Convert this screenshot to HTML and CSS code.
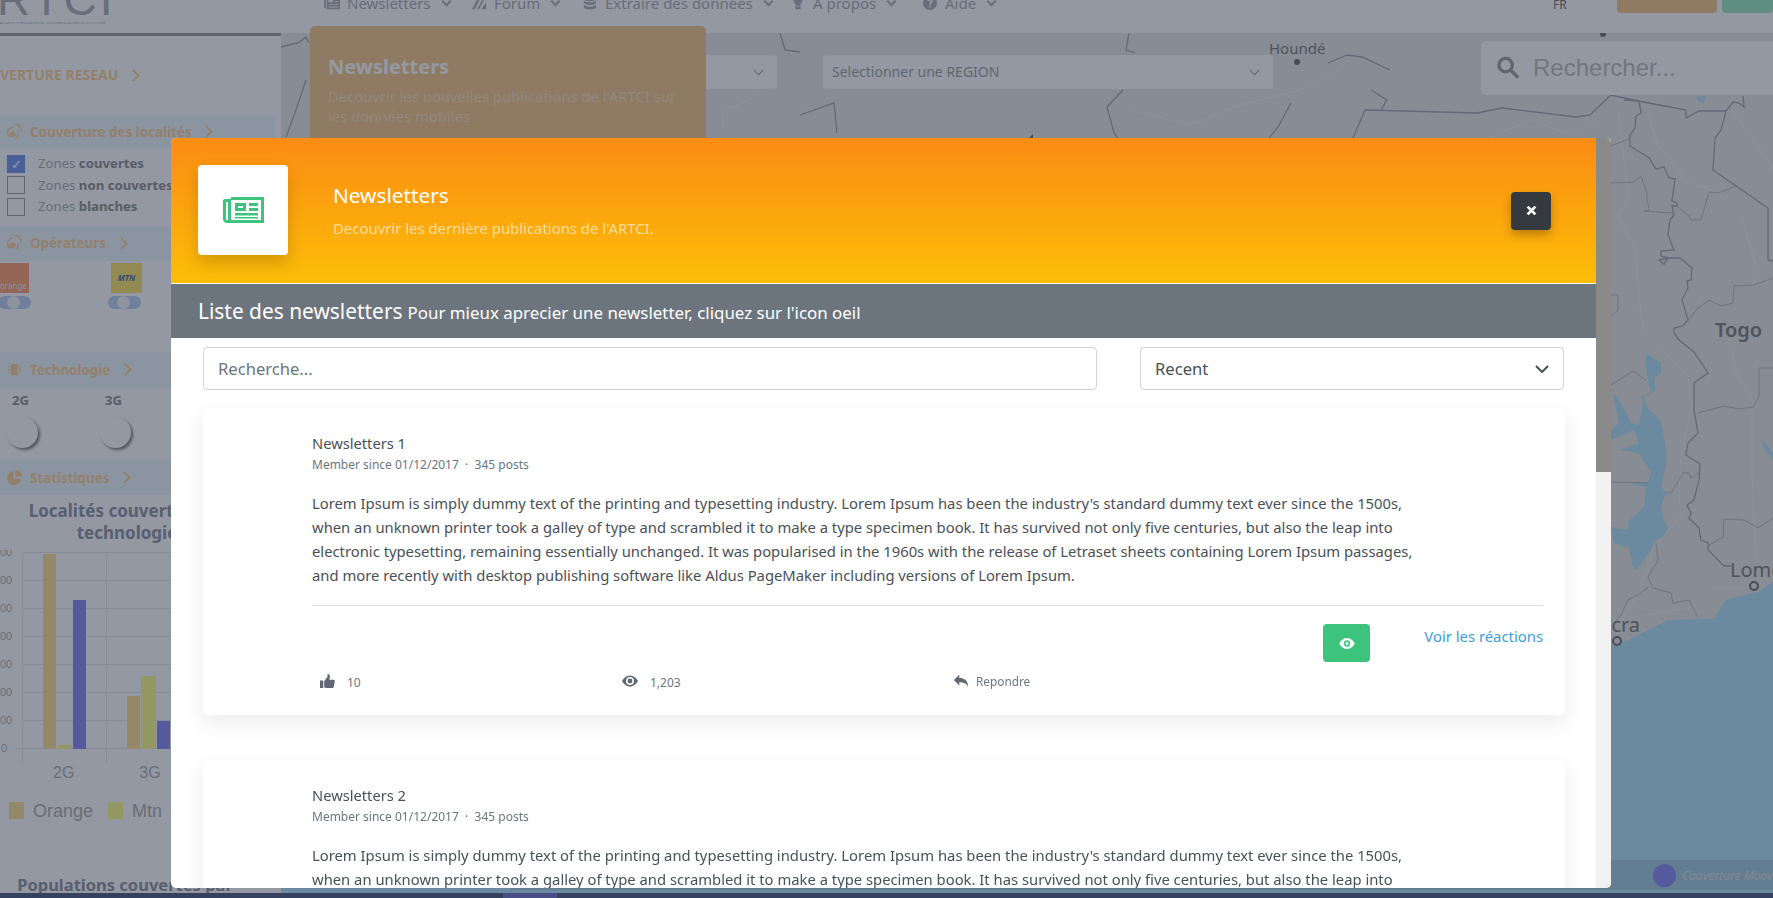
FILE: index.html
```html
<!DOCTYPE html>
<html lang="fr">
<head>
<meta charset="utf-8">
<title>ARTCI - Newsletters</title>
<link rel="stylesheet" href="styles.css">
</head>
<body>
<div class="page">
  <header class="topbar">
    <div class="logo">
      <div class="logo-word">RTCI</div>
      <div class="logo-sub">AUTORITE DE REGULATION DES TELECOMMUNICATIONS DE COTE D'IVOIRE</div>
    </div>
    <nav class="nav">
      <span class="nav-item nav-news"><svg class="nav-ico" viewBox="0 0 20 16"><path d="M1 3h2v11H1zM4 1h15v14H4zM6 3v4h5V3zm7 0v1h4V3zm0 3v1h4V6zM6 9v1h11V9zm0 3v1h11v-1z" fill-rule="evenodd"/></svg>Newsletters<i class="chev"></i></span>
      <span class="nav-item nav-forum"><svg class="nav-ico" viewBox="0 0 20 16"><path d="M2 15 9 2h3L5 15zm6 0 6-11h2l-6 11zm5 0 5-8v8z"/></svg>Forum<i class="chev"></i></span>
      <span class="nav-item nav-data"><svg class="nav-ico" viewBox="0 0 16 16"><ellipse cx="8" cy="3" rx="7" ry="3"/><path d="M1 5c2 3 12 3 14 0v3c-2 3-12 3-14 0zm0 5c2 3 12 3 14 0v3c-2 3-12 3-14 0z"/></svg>Extraire des données<i class="chev"></i></span>
      <span class="nav-item nav-about"><svg class="nav-ico" viewBox="0 0 12 16"><path d="M6 0a5 5 0 0 1 3 9v2H3V9a5 5 0 0 1 3-9zM3 12h6v3H3z"/></svg>À propos<i class="chev"></i></span>
      <span class="nav-item nav-help"><svg class="nav-ico" viewBox="0 0 16 16"><path fill-rule="evenodd" d="M8 0a8 8 0 1 1 0 16A8 8 0 0 1 8 0zM5 6h2c0-1 2-1.500 2 0 0 1-2 1.500-2 4h2c0-2 2-2.500 2-4.500C11 2.500 5.500 2.500 5 6zm2 5v2h2v-2z"/></svg>Aide<i class="chev"></i></span>
    </nav>
    <span class="lang">FR</span>
    <span class="top-btn top-btn-brown"></span>
    <span class="top-btn top-btn-green"></span>
  </header>
  <div class="main">
    <aside class="sidebar">
      <div class="side-title">VERTURE RESEAU<i class="gt"></i></div>
      <div class="band band-first"><svg class="band-ico" viewBox="0 0 16 16"><circle cx="6" cy="11" r="2.500"/><path d="M2 6c1-2 3-3 5-3M3 14c-3-2-3-6-1-8M9 15c2-1 3-3 3-5M7 0c5 0 8 3 8 8"/></svg>Couverture des localités<i class="gt"></i></div>
      <ul class="zones">
        <li><span class="check check-on">✓</span>Zones&nbsp;<b>couvertes</b></li>
        <li><span class="check"></span>Zones&nbsp;<b>non couvertes</b></li>
        <li><span class="check"></span>Zones&nbsp;<b>blanches</b></li>
      </ul>
      <div class="band band-op"><svg class="band-ico" viewBox="0 0 16 16"><circle cx="6" cy="11" r="2.500"/><path d="M2 6c1-2 3-3 5-3M3 14c-3-2-3-6-1-8M9 15c2-1 3-3 3-5M7 0c5 0 8 3 8 8"/></svg>Opérateurs<i class="gt"></i></div>
      <div class="ops">
        <div class="op"><span class="op-logo op-orange">orange</span><span class="toggle"></span></div>
        <div class="op op-mtn"><span class="op-logo op-yellow"><em>MTN</em></span><span class="toggle"></span></div>
      </div>
      <div class="band band-tech"><svg class="band-ico band-solid" viewBox="0 0 16 16"><path d="M4 2h8v12H4zM1 4h2v1.500H1zm0 3h2v1.500H1zm0 3h2v1.500H1zm12-6h2v1.500h-2zm0 3h2v1.500h-2zm0 3h2v1.500h-2z"/></svg>Technologie<i class="gt"></i></div>
      <div class="techs">
        <div class="tech"><b>2G</b><span class="radio"></span></div>
        <div class="tech"><b>3G</b><span class="radio"></span></div>
      </div>
      <div class="band band-stat"><svg class="band-ico band-solid" viewBox="0 0 16 16"><path d="M7 1v8h8a7.500 7.500 0 1 1-8-8zM9 0a7 7 0 0 1 7 7H9z"/></svg>Statistiques<i class="gt"></i></div>
      <h3 class="chart-title">Localités couvertes par technologie</h3>
      <svg class="chart" viewBox="0 0 281 212">
        <g class="grid"><path d="M22 2.500H281M22 30.500H281M22 58.500H281M22 86.500H281M22 114.500H281M22 142.500H281M22 170.500H281M15 198.500H281"/><path d="M22.500 2V212M106.500 2V212M190.500 2V212"/></g>
        <g class="ticks"><text x="0" y="6">00</text><text x="0" y="34">00</text><text x="0" y="62">00</text><text x="0" y="90">00</text><text x="0" y="118">00</text><text x="0" y="146">00</text><text x="0" y="174">00</text><text x="1" y="202">0</text></g>
        <rect class="bar-o" x="43" y="4" width="13" height="195"/><rect class="bar-m" x="57" y="195" width="15" height="4"/><rect class="bar-b" x="73" y="50" width="13" height="149"/>
        <rect class="bar-o" x="127" y="146" width="13" height="53"/><rect class="bar-m" x="141" y="126" width="15" height="73"/><rect class="bar-b" x="157" y="171" width="13" height="28"/>
      </svg>
      <div class="axis"><span>2G</span><span>3G</span></div>
      <div class="legend"><i class="sw sw-o"></i>Orange<i class="sw sw-m"></i>Mtn</div>
      <h3 class="chart-title chart-title-2">Populations couvertes par</h3>
    </aside>
    <section class="map">
      <svg class="map-svg" viewBox="281 33 1492 865" preserveAspectRatio="none">
        <path class="water" d="M1611 646 1628 640 1668 620 1699 619 1716 618 1716 615 1726 600 1744 595 1758 592 1773 582V898H281V888H1611z"/>
        <path class="water" d="M1646 353 1661 363 1661 373 1654 378 1656 390 1644 398 1649 410 1661 420 1664 437 1666 450 1666 467 1661 487 1666 493 1661 507 1664 520 1668 527 1664 537 1656 540 1649 553 1636 570 1633 567 1629 547 1614 543 1611 527 1628 530 1628 522 1644 507 1646 487 1629 483 1648 482 1651 473 1639 453 1619 450 1639 443 1634 430 1611 440 1611 430 1619 423 1613 393 1621 403 1631 423 1639 425 1643 403 1641 397 1651 393 1648 380 1646 367z"/>
        <path class="water" d="M1761 438 1773 453V460L1764 448zM1696 96H1706L1704 103 1699 102z"/>
        <g class="border-thin">
          <path d="M1618 113 1626 173 1629 200 1618 215 1636 250 1639 300 1644 333"/>
          <path d="M1644 103 1658 146 1681 173 1683 180 1718 193 1741 216 1758 273 1751 290"/>
          <path d="M1731 110 1768 160 1773 173"/>
          <path d="M1654 340 1688 377 1691 407 1681 457 1679 503 1686 510 1654 547 1640 590 1620 625"/>
          <path d="M1611 620 1691 608 1711 588 1749 588"/>
          <path d="M1732 345 1735 370 1752 400 1752 480 1756 560"/>
          <path d="M1130 110 1190 125 1240 105 1300 90 1340 70"/>
          <path d="M1490 138 1530 120 1570 135 1600 120"/>
          <path d="M722 130 724 110 750 100 760 90"/>
        </g>
        <g class="border-mid">
          <path d="M1611 146 1629 139M1611 183 1634 182 1641 176 1646 190 1649 210 1644 211 1673 213"/>
          <path d="M1677 206 1688 215 1691 220 1701 220 1709 192 1718 193 1736 186"/>
          <path d="M1611 295H1618V310L1611 316"/>
          <path d="M1688 320 1698 308 1709 300 1721 306 1733 303 1734 286 1754 285 1773 278"/>
          <path d="M1773 368H1759V397L1753 407 1739 409 1724 406 1698 413"/>
          <path d="M1773 518 1758 528 1744 520 1724 519 1723 537 1709 545"/>
          <path d="M1611 385 1633 371 1646 380M1611 482 1648 483"/>
          <path d="M1666 493H1671L1683 473H1689L1691 478 1699 473"/>
          <path d="M1656 543 1658 560 1648 577 1653 588 1671 593 1673 603 1689 600 1698 617"/>
          <path d="M1648 587 1641 593 1628 600 1621 615 1611 627"/>
        </g>
        <g class="border">
          <path d="M1353 138 1365 110 1477 113 1502 108 1576 117 1590 115 1611 95 1638 101 1686 110V118L1699 111H1726L1733 102 1739 103 1744 107 1743 96"/>
          <path d="M1624 100 1639 101 1641 113 1636 116 1635 128 1630 135V146L1649 158 1656 169 1664 167 1669 178 1675 179 1672 201 1677 203V206H1672L1674 215 1670 220 1668 235 1674 250 1661 251V256L1668 258 1664 264 1659 260 1668 258H1680L1692 268 1691 280 1687 281 1688 288 1682 300 1688 320 1683 326 1674 328V333L1679 340 1694 352 1708 373 1694 383V410L1698 433 1688 443 1686 455 1700 464 1699 480 1694 500 1687 505 1691 513 1689 518 1699 528 1701 540 1708 543V550L1724 566H1731"/>
          <path d="M1726 111 1721 130 1715 138 1713 170 1768 208V260L1773 261"/>
          <path d="M1129 33 1126 50 1135 53M1123 90 1107 107 1114 133 1118 138"/>
          <path d="M1291 103 1278 127 1269 138M800 115 834 103 837 133"/>
          <path d="M281 47 298 43 306 37 309 43M286 137 296 110 306 80M780 33 785 50 800 52M1390 70 1362 57 1347 55 1328 63M1371 90 1387 100 1381 110"/>
        </g>
        <circle class="pin" cx="1297" cy="62" r="3"/>
        <circle class="pin" cx="1603" cy="34" r="3"/>
        <path class="pin" d="M1033 138 1033 134 1029 138z"/>
        <circle class="pin-ring" cx="1754" cy="586" r="4"/>
        <circle class="pin-ring" cx="1617" cy="641" r="4"/>
      </svg>
      <div class="select-box select-a"><i class="chev"></i></div>
      <div class="select-box select-b">Selectionner une REGION<i class="chev"></i></div>
      <div class="card-news">
        <h2>Newsletters</h2>
        <p>Decouvrir les nouvelles publications de l'ARTCI sur les données mobiles</p>
      </div>
      <div class="search-box">
        <svg class="search-ico" viewBox="0 0 24 24"><circle cx="9" cy="9" r="7"/><path d="m14 14 8 8"/></svg>Rechercher...
      </div>
      <span class="city city-hounde">Houndé</span>
      <span class="city city-togo">Togo</span>
      <span class="city city-lome">Lomé</span>
      <span class="city city-accra">Accra</span>
      <div class="map-legend"><i class="moov-dot"></i>Couverture Moov</div>
    </section>
  </div>
  <div class="bottom-strip"><i></i></div>
</div>

<div class="overlay"></div>

<div class="modal">
  <div class="modal-scroll">
    <div class="modal-head">
      <div class="head-icon">
        <svg viewBox="0 0 41 26" width="41" height="26"><path class="ico-news" fill-rule="evenodd" d="M8 0h33v26H4C1.800 26 0 24.200 0 22V4c0-1.300 1-2 2-2h6zM3 5v17c0 .6.400 1 1 1h1V5zM8 3v20h30V3zM12 6h11v8H12zm3 3v2h5V9zM26 6h9v3h-9zm0 5h9v3h-9zM12 16h23v2.500H12zm0 4h23v1.500H12z"/></svg>
      </div>
      <div class="head-text">
        <h2>Newsletters</h2>
        <p>Decouvrir les dernière publications de l'ARTCI.</p>
      </div>
      <button class="close" type="button"><svg viewBox="0 0 10 10" width="11" height="11"><path d="m1.500 1.500 7 7m0-7-7 7"/></svg></button>
    </div>
    <div class="modal-bar"><strong>Liste des newsletters</strong> <span>Pour mieux aprecier une newsletter, cliquez sur l'icon oeil</span></div>
    <div class="modal-body">
      <div class="filters">
        <div class="field field-search">Recherche...</div>
        <div class="field field-select">Recent<svg class="field-chev" viewBox="0 0 14 8" width="14" height="8"><path d="m1 1 6 6 6-6"/></svg></div>
      </div>

      <article class="post">
        <h4>Newsletters 1</h4>
        <div class="meta">Member since 01/12/2017 &nbsp;·&nbsp; 345 posts</div>
        <p>Lorem Ipsum is simply dummy text of the printing and typesetting industry. Lorem Ipsum has been the industry's standard dummy text ever since the 1500s, when an unknown printer took a galley of type and scrambled it to make a type specimen book. It has survived not only five centuries, but also the leap into electronic typesetting, remaining essentially unchanged. It was popularised in the 1960s with the release of Letraset sheets containing Lorem Ipsum passages, and more recently with desktop publishing software like Aldus PageMaker including versions of Lorem Ipsum.</p>
        <hr>
        <div class="post-actions">
          <button class="eye-btn" type="button"><svg viewBox="0 0 20 14" width="16" height="11"><path fill-rule="evenodd" d="M10 0c4.500 0 8 3.500 10 7-2 3.500-5.500 7-10 7S2 10.500 0 7c2-3.500 5.500-7 10-7zm0 3a4 4 0 1 0 0 8 4 4 0 0 0 0-8zm0 2a2 2 0 1 1 0 4 2 2 0 0 1 0-4z"/></svg></button>
          <a class="reactions" href="#">Voir les réactions</a>
        </div>
        <div class="post-foot">
          <span class="stat stat-like"><svg viewBox="0 0 16 16" width="15" height="15"><path d="M0 7h3.500v8H0zM4.500 7.500 8 3V0c2 0 3 1.500 2.500 3.500L10 6h4.500c1 0 1.500 1 1.300 2l-1.300 6c-.2.700-.8 1-1.500 1H7c-1 0-1.500-.5-2.500-.8z"/></svg><span>10</span></span>
          <span class="stat stat-views"><svg viewBox="0 0 20 14" width="16" height="12"><path fill-rule="evenodd" d="M10 0c4.500 0 8 3.500 10 7-2 3.500-5.500 7-10 7S2 10.500 0 7c2-3.500 5.500-7 10-7zm0 2a5 5 0 1 0 0 10 5 5 0 0 0 0-10zm0 2a3 3 0 1 1 0 6 3 3 0 0 1 0-6z"/></svg><span>1,203</span></span>
          <span class="stat stat-reply"><svg viewBox="0 0 16 14" width="14" height="13"><path d="M6 0v4c6 0 10 3 10 10-2-4-5-5-10-5v4L0 6.500z"/></svg><span>Repondre</span></span>
        </div>
      </article>

      <article class="post">
        <h4>Newsletters 2</h4>
        <div class="meta">Member since 01/12/2017 &nbsp;·&nbsp; 345 posts</div>
        <p>Lorem Ipsum is simply dummy text of the printing and typesetting industry. Lorem Ipsum has been the industry's standard dummy text ever since the 1500s, when an unknown printer took a galley of type and scrambled it to make a type specimen book. It has survived not only five centuries, but also the leap into electronic typesetting, remaining essentially unchanged. It was popularised in the 1960s with the release of Letraset sheets containing Lorem Ipsum passages, and more recently with desktop publishing software like Aldus PageMaker including versions of Lorem Ipsum.</p>
      </article>
    </div>
  </div>
  <div class="scrollbar"><div class="scroll-thumb"></div></div>
</div>
</body>
</html>
```
FILE: styles.css
```css
* { box-sizing: border-box; }
html, body { margin: 0; height: 100%; overflow: hidden; }
body { font-family: "Noto Sans", "Open Sans", sans-serif; color: #495057; background: #fff; }
ul { margin: 0; padding: 0; list-style: none; }

/* --- page behind the modal --- */
.page { height: 898px; display: flex; flex-direction: column; overflow: hidden; }
.topbar { height: 33px; flex: none; background: #fff; display: flex; align-items: flex-start; overflow: hidden; }
.logo { width: 347px; flex: none; margin-top: -24px; color: #a8a8b0; }
.logo-word { font: 400 46px/46px "Liberation Sans", sans-serif; letter-spacing: 3px; margin-left: -3px; }
.logo-sub { width: 110px; font-size: 3px; line-height: 3px; white-space: nowrap; overflow: hidden; }
.nav { display: flex; margin-top: -9px; font-size: 15px; line-height: 24px; color: #a8a8b0; }
.nav-item { display: flex; align-items: center; white-space: nowrap; }
.nav-ico { width: 18px; height: 14px; margin-left: -24px; margin-right: 6px; fill: #a8a8b0; }
.nav-news { width: 147px; }
.nav-forum { width: 111px; }
.nav-data { width: 208px; }
.nav-about { width: 132px; }
.nav-help { width: 609px; }
.chev { display: inline-block; width: 7px; height: 7px; border-right: 2px solid currentColor; border-bottom: 2px solid currentColor; transform: rotate(45deg); margin: -3px 0 0 12px; }
.lang { position: absolute; left: 1553px; top: -3px; font-size: 12px; line-height: 16px; color: #666; }
.top-btn { position: absolute; top: 0; height: 13px; border-radius: 0 0 4px 4px; }
.top-btn-brown { left: 1617px; width: 100px; background: #f6c280; }
.top-btn-green { left: 1722px; width: 51px; background: #96e8b8; }

.main { flex: 1; display: flex; min-height: 0; }
.sidebar { width: 281px; flex: none; background: #fff; border-top: 3px solid #999; overflow: hidden; color: #888; }
.side-title { display: flex; align-items: center; margin: 27px 0 0 0; font-size: 14px; font-weight: 700; line-height: 24px; color: #ffcf90; white-space: nowrap; height: 24px; }
.gt { display: block; flex: none; width: 9px; height: 9px; margin-left: 11px; border-top: 2px solid currentColor; border-right: 2px solid currentColor; transform: rotate(45deg); }
.band { width: 275px; display: flex; align-items: center; font-size: 13.400px; font-weight: 700; color: #ffcf90; background: #eef8ff; padding-left: 30px; position: relative; white-space: pre; }
.band-ico { position: absolute; left: 7px; top: 50%; width: 15px; height: 15px; margin-top: -8px; fill: #ffcf90; stroke: #ffcf90; stroke-width: 1.500; }
.band-ico path { fill: none; }
.band-solid { stroke: none; }
.band-solid path { fill: #ffcf90; }
.band-first { height: 33px; margin-top: 28px; }
.band-op { height: 35px; margin-top: 8px; }
.band-tech { height: 36px; margin-top: 41px; }
.band-stat { height: 34px; margin-top: 1px; }
.zones { margin: 5px 0 0 7px; font-size: 13.200px; line-height: 21.500px; color: #aaa; }
.zones li { display: flex; align-items: center; white-space: nowrap; }
.zones b { color: #888; }
.check { width: 18px; height: 18px; margin-right: 13px; border: 1px solid #999; display: block; font-size: 13px; line-height: 17px; text-align: center; color: #fff; flex: none; }
.check-on { background: #6f8ff0; border-color: #6f8ff0; }
.ops { display: flex; height: 48px; margin-top: 2px; }
.op { width: 111px; display: flex; flex-direction: column; }
.op-mtn { width: 60px; }
.op-logo { display: block; width: 29px; height: 30px; overflow: hidden; font-size: 8px; line-height: 46px; color: #eee; }
.op-orange { background: #ff9a6a; }
.op-yellow { width: 31px; background: #ffe060; text-align: center; line-height: 30px; color: #3a6ab0; font-weight: 700; }
.toggle { display: block; position: relative; width: 33px; height: 13px; margin: 3px 0 0 -2px; background: #b8cdf0; border-radius: 7px; }
.toggle::before { content: ""; position: absolute; left: 9px; top: 0; width: 13px; height: 13px; border-radius: 50%; background: #f4f4f4; }
.op-mtn .toggle { margin-left: -3px; }
.techs { display: flex; height: 72px; }
.tech { width: 93px; padding: 3px 0 0 8px; font-size: 13px; line-height: 18px; color: #888; }
.tech b { display: block; margin-left: 4px; }
.radio { display: block; width: 31px; height: 31px; margin: 8px 0 0 -1px; border-radius: 50%; background: #fff; box-shadow: 2px 2px 3px #777; }
.chart-title { margin: 5px 0 0; width: 254px; font-size: 17px; line-height: 22px; font-weight: 700; text-align: center; color: #8a8a9a; }
.chart { display: block; width: 281px; height: 212px; margin-top: 6px; }
.chart .grid path { stroke: #e6e6e6; stroke-width: 1; fill: none; }
.ticks { font: 11px "Liberation Sans", sans-serif; fill: #aaa; }
.bar-o { fill: #ffe08c; }
.bar-m { fill: #ffff82; }
.bar-b { fill: #8280f5; }
.axis { display: flex; padding-left: 53px; gap: 65px; font: 16px/22px "Liberation Sans", sans-serif; color: #aaa; }
.legend { display: flex; align-items: center; margin: 16px 0 0 9px; font: 18px/22px "Liberation Sans", sans-serif; color: #aaa; }
.sw { width: 15px; height: 17px; margin-right: 9px; }
.sw-o { background: #ffe08c; }
.sw-m { margin-left: 15px; background: #ffff82; }
.chart-title-2 { margin-top: 52px; width: 250px; font-size: 16.500px; }

.map { flex: 1; position: relative; background: #e6e6e4; }
.map-svg { position: absolute; inset: 0; width: 100%; height: 100%; }
.water { fill: #b0e2f8; }
.border path { fill: none; stroke: #a0a0aa; stroke-width: 1.300; }
.border-mid path { fill: none; stroke: #b8b8c0; stroke-width: 1; }
.border-thin path { fill: none; stroke: #fff; stroke-width: 1; opacity: .45; }
.pin { fill: #666; }
.pin-ring { fill: #e6e6e4; stroke: #666; stroke-width: 2; }
.select-box { position: absolute; top: 22px; height: 34px; background: #fff; border-radius: 3px; font-size: 14px; line-height: 34px; padding-left: 9px; color: #999; }
.select-a { left: 200px; width: 296px; }
.select-b { left: 542px; width: 450px; }
.select-box .chev { position: absolute; right: 15px; top: 12px; width: 7px; height: 7px; border-width: 1.500px; margin: 0; }
.card-news { position: absolute; left: 29px; top: -7px; width: 396px; height: 130px; padding: 27px 18px; background: #f6c280; border-radius: 5px; color: #fff; }
.card-news h2 { margin: 0; font-size: 20px; line-height: 28px; font-weight: 700; }
.card-news p { margin: 5px 0 0; font-size: 14.800px; line-height: 20px; color: rgba(255,255,255,.45); }
.search-box { position: absolute; left: 1200px; top: 8px; width: 300px; height: 54px; background: #fff; border-radius: 5px; display: flex; align-items: center; font: 24px "Liberation Sans", sans-serif; color: #bbb; padding-left: 16px; }
.search-ico { width: 23px; height: 26px; margin-right: 13px; fill: none; stroke: #999; stroke-width: 3.500; }
.city { position: absolute; font-size: 15px; line-height: 20px; color: #777; }
.city-hounde { left: 988px; top: 5px; }
.city-togo { left: 1434px; top: 284px; font-size: 20px; line-height: 26px; font-weight: 600; }
.city-lome { left: 1449px; top: 524px; font-size: 20px; line-height: 26px; }
.city-accra { left: 1308px; top: 579px; font-size: 20px; line-height: 26px; }
.map-legend { position: absolute; left: 230px; right: 0; bottom: 8px; height: 30px; padding-left: 1142px; background: rgba(40,40,40,.12); display: flex; align-items: center; font-size: 12px; font-style: italic; color: #ddd; white-space: nowrap; }
.moov-dot { width: 23px; height: 23px; margin-right: 6px; border-radius: 50%; background: #8280f5; }
.bottom-strip { position: absolute; left: 0; right: 0; top: 893px; height: 5px; background: #44507a; }
.bottom-strip i { display: block; margin-left: 503px; width: 54px; height: 5px; background: #6a68c8; }

.overlay { position: fixed; inset: 0; background: rgba(40,50,70,.5); }

/* --- modal --- */
.modal { position: fixed; left: 171px; top: 138px; width: 1440px; height: 750px; display: flex; background: #fff; border-radius: 5px; overflow: hidden; }
.modal-scroll { flex: 1; min-width: 0; overflow: hidden; }
.scrollbar { width: 15px; flex: none; background: #f1f1f1; }
.scroll-thumb { height: 334px; background: #8a8a8a; }
.modal-head { height: 145px; display: flex; align-items: center; padding: 0 45px 0 27px; background: linear-gradient(180deg, #fb8c13, #fcbd08); }
.head-icon { width: 90px; height: 90px; flex: none; display: flex; align-items: center; justify-content: center; background: #fff; border-radius: 4px; box-shadow: 0 8px 16px rgba(0,0,0,.16); margin-top: -1px; }
.ico-news { fill: #3cc47c; }
.head-text { flex: 1; margin: -2px 0 0 45px; }
.head-text h2 { margin: 0; font-size: 20.800px; line-height: 28px; font-weight: 400; color: #fff; }
.head-text p { margin: 9px 0 0; font-size: 14.900px; line-height: 20px; color: rgba(255,255,255,.6); }
.close { width: 40px; height: 38px; padding: 0; border: 0; border-radius: 4px; background: #343a40; box-shadow: 0 5px 10px rgba(0,0,0,.25); display: flex; align-items: center; justify-content: center; }
.close path { stroke: #fff; stroke-width: 2.500; fill: none; }
.modal-bar { height: 55px; border-top: 1px solid #fff; padding: 0 27px; display: flex; align-items: center; gap: 5px; background: #6c757d; color: #fff; white-space: nowrap; }
.modal-bar strong { font-size: 20.900px; font-weight: 400; margin-top: -1px; }
.modal-bar span { font-size: 16.900px; margin-top: 2px; }
.modal-body { padding: 9px 32px 0 32px; }
.filters { display: flex; justify-content: space-between; }
.field { height: 43px; border: 1px solid #ced4da; border-radius: 4px; padding: 0 14px; font-size: 16.600px; line-height: 41px; color: #6c757d; }
.field-search { width: 894px; }
.field-select { width: 424px; display: flex; justify-content: space-between; align-items: center; color: #495057; }
.field-chev { fill: none; stroke: #495057; stroke-width: 2; }
.post { height: 307px; margin: 18px -1px 0 0; padding: 24px 22px 0 109px; background: #fff; border-radius: 5px; box-shadow: 0 8px 22px rgba(0,0,0,.08); }
.post + .post { margin-top: 45px; }
.post h4 { margin: 0; font-size: 14.700px; line-height: 22px; font-weight: 400; color: #495057; }
.meta { margin-top: 1px; font-size: 12px; line-height: 20px; color: #6c757d; }
.post p { width: 1105px; margin: 16px 0 0; font-size: 14.800px; line-height: 24px; color: #495057; }
.post hr { margin: 18px 0 0; border: 0; border-top: 1px solid #ddd; }
.post-actions { display: flex; justify-content: flex-end; align-items: flex-start; gap: 54px; margin-top: 18px; height: 38px; }
.eye-btn { width: 47px; height: 38px; padding: 0; border: 0; border-radius: 4px; background: #3cc47c; display: flex; align-items: center; justify-content: center; }
.eye-btn path { fill: #fff; }
.reactions { font-size: 14.850px; line-height: 24px; color: #3d9ddf; text-decoration: none; }
.post-foot { display: flex; margin: 8px 0 0 8px; font-size: 12px; line-height: 20px; color: #6c757d; }
.stat { display: flex; align-items: center; }
.stat svg { fill: #5f6873; margin-right: 12px; }
.stat-like { width: 302px; }
.stat-like span, .stat-views span { margin-top: 3px; }
.stat-views { width: 332px; }
.stat-views svg { margin-top: -2px; }
.stat-reply { font-size: 11.800px; margin-top: -2px; }
.stat-reply svg { margin-right: 8px; }
```
